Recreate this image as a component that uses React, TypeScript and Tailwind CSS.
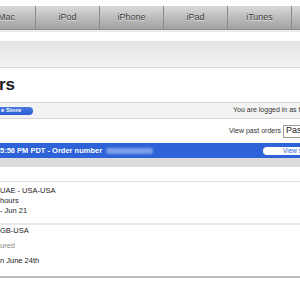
import React from "react";

const navItems = ["Mac", "iPod", "iPhone", "iPad", "iTunes", ""];

const NavBar = () => (
  <div className="h-[24px] overflow-hidden border-b border-[#8d8d8d] bg-gradient-to-b from-[#dadada] via-[#bcbcbc] to-[#a2a2a2]">
    <div className="-ml-[28px] flex h-full">
      {navItems.map((item, i) => (
        <div
          key={i}
          className={`flex h-full w-[64px] shrink-0 items-center justify-center border-r border-[#8a8a8a] text-[9px] text-[#3c3c3c] [text-shadow:0_1px_0_#e6e6e6] ${i === 0 ? "pl-[6px]" : ""}`}
        >
          {item}
        </div>
      ))}
    </div>
  </div>
);

type Line = { text: string; muted?: boolean };

const OrderRow = ({ lines, last }: { lines: Line[]; last?: boolean }) => (
  <div
    className={
      last
        ? "flex flex-col gap-[5px] border-b-2 border-[#bdbdbd] pb-[10px] pt-[1px]"
        : "flex flex-col border-b-2 border-[#e9e9e9] pb-[7px]"
    }
  >
    {lines.map((l, i) => (
      <div key={i} className={`text-[7.5px] leading-[10px] ${l.muted ? "text-[#8a8a8a]" : "text-[#222]"}`}>
        {l.text}
      </div>
    ))}
  </div>
);

export default function App() {
  return (
    <div className="h-[300px] w-[300px] overflow-hidden bg-white font-['Liberation_Sans',Arial,sans-serif]">
      <div className="h-[6px]" />
      <NavBar />
      <div className="h-[2px] bg-[#ececec]" />
      <div className="h-[9px]" />
      <div className="h-[27px] border-b border-[#dadada] bg-gradient-to-b from-[#e4e4e4] to-[#f3f3f3]" />

      {/* title */}
      <div className="flex h-[34px] items-center overflow-hidden">
        <span className="-ml-[1px] text-[17px] font-bold text-[#1a1a1a]">rs</span>
      </div>

      {/* account bar */}
      <div className="flex h-[17px] items-center overflow-hidden border-y border-[#d5d5d5] bg-[#f3f3f3]">
        <div className="flex h-[8px] w-[33px] shrink-0 items-center rounded-r-full bg-gradient-to-b from-[#4a7ae0] to-[#2a5bd3] pl-[1px] text-[6px] font-bold text-white">
          e Store
        </div>
        <span className="ml-[200px] whitespace-nowrap text-[7px] text-[#333]">You are logged in as f</span>
      </div>

      {/* past orders */}
      <div className="flex h-[24px] items-center justify-end overflow-hidden">
        <span className="mr-[2px] whitespace-nowrap text-[7px] text-[#333]">View past orders</span>
        <div className="-mr-[6px] flex h-[13px] w-[23px] shrink-0 items-center border border-[#9a9a9a] bg-white pl-[2px] text-[9px] text-[#222]">
          Pas
        </div>
      </div>

      {/* order header */}
      <div className="flex h-[15px] items-center overflow-hidden bg-[#2d62d8]">
        <span className="whitespace-nowrap text-[7.5px] font-bold text-white">5:56 PM PDT - Order number</span>
        <span className="ml-[4px] h-[6px] w-[47px] shrink-0 rounded-[2px] bg-[#7d9ee9] blur-[1px]" />
        <div className="ml-auto -mr-[10px] flex h-[8px] w-[47px] shrink-0 items-center rounded-full bg-white pl-[20px] text-[6.5px] text-[#2d62d8]">
          View s
        </div>
      </div>
      <div className="h-[9px] bg-[#dcdcdc]" />

      <div className="h-[15px] border-b border-[#e0e0e0]" />

      <div className="pt-[4px]">
        <OrderRow lines={[{ text: "UAE - USA-USA" }, { text: "" }, { text: "hours" }, { text: "- Jun 21" }]} />
        <OrderRow last lines={[{ text: "GB-USA" }, { text: "ured", muted: true }, { text: "n June 24th" }]} />
      </div>
    </div>
  );
}
